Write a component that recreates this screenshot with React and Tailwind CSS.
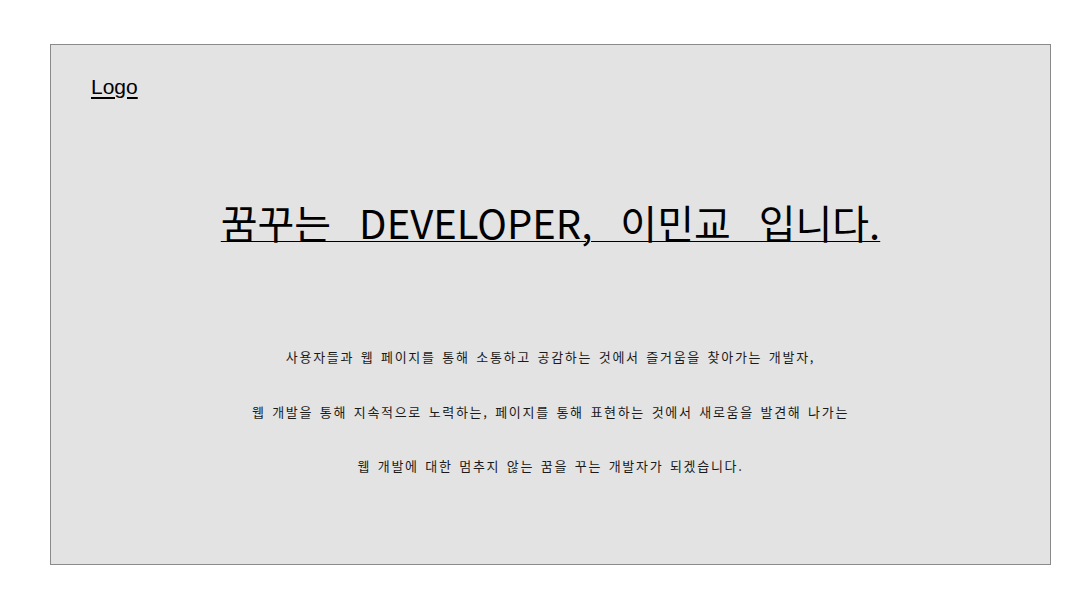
const lines = [
  "사용자들과 웹 페이지를 통해 소통하고 공감하는 것에서 즐거움을 찾아가는 개발자,",
  "웹 개발을 통해 지속적으로 노력하는, 페이지를 통해 표현하는 것에서 새로움을 발견해 나가는",
  "웹 개발에 대한 멈추지 않는 꿈을 꾸는 개발자가 되겠습니다.",
];

export default function App() {
  return (
    <div className="min-h-[613px] w-full bg-white pt-[44px] pl-[50px]">
      <div className="flex h-[521px] w-[1001px] flex-col border border-[#8a8a8a] bg-[#e3e3e3] font-['Noto_Sans_CJK_KR',sans-serif] text-black">
        <header className="pl-[40px] pt-[30px]">
          <a className="font-['Liberation_Sans',sans-serif] text-[21px] leading-[24px] underline underline-offset-[3px]">
            Logo
          </a>
        </header>
        <h1 className="mt-[99px] text-center text-[40px] leading-[48px] font-normal [word-spacing:19px] underline decoration-1 underline-offset-[2px]">
          꿈꾸는 DEVELOPER, 이민교 입니다.
        </h1>
        <div className="mt-[84px] flex flex-col items-center text-[13px] tracking-[1.7px] [word-spacing:2px] text-[#1a1a1a]">
          {lines.map((t) => (
            <p key={t} className="leading-[54.5px]">
              {t}
            </p>
          ))}
        </div>
      </div>
    </div>
  );
}
